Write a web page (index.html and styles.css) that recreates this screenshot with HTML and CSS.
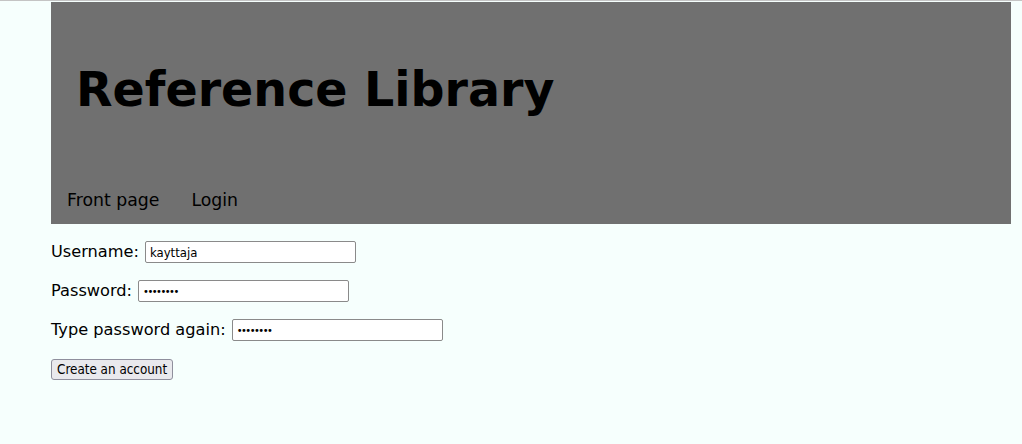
FILE: index.html
```html
<!DOCTYPE html>
<html>
<head>
<meta charset="utf-8">
<title>Reference Library</title>
<link rel="stylesheet" href="styles.css">
</head>
<body>
<div class="page">
  <header class="header">
    <h1 class="title">Reference Library</h1>
    <nav class="nav">
      <a class="nav-link" href="#">Front page</a>
      <a class="nav-link" href="#">Login</a>
    </nav>
  </header>
  <form class="form">
    <div class="row"><span class="label">Username:</span><input class="field" type="text" value="kayttaja"></div>
    <div class="row"><span class="label">Password:</span><input class="field secret" type="password" value="salasana"></div>
    <div class="row"><span class="label">Type password again:</span><input class="field secret" type="password" value="salasana"></div>
    <div class="row"><button class="btn" type="button">Create an account</button></div>
  </form>
</div>
</body>
</html>
```

FILE: styles.css
```css
html {
  background: #f6fffd;
}
body {
  margin: 0;
  border-top: 1px solid #c4c4c4;
  font-family: "DejaVu Sans", sans-serif;
  font-size: 16px;
  color: #000;
}
.page {
  margin-left: 51px;
  width: 960px;
  padding-top: 1px;
}
.header {
  background: #707070;
  height: 222px;
  display: flex;
  flex-direction: column;
}
.title {
  margin: 0;
  padding: 58px 0 0 25px;
  font-size: 47.5px;
  font-weight: bold;
  line-height: 60px;
}
.nav {
  margin-top: auto;
  display: flex;
  padding-bottom: 13px;
}
.nav-link {
  color: #000;
  text-decoration: none;
  font-size: 17.3px;
  padding: 0 16px;
  line-height: 22px;
}
.form {
  margin: 0;
  padding-top: 16px;
  display: flex;
  flex-direction: column;
  gap: 16px;
}
.row {
  height: 23px;
  display: flex;
  align-items: center;
  gap: 6px;
}
.label {
  font-size: 16.2px;
  line-height: 23px;
}
.field {
  box-sizing: border-box;
  width: 211px;
  height: 22px;
  margin: 1px 0 0;
  padding: 1px 4px;
  border: 1px solid #8a8a8a;
  border-radius: 2px;
  background: #fff;
  font-family: "DejaVu Sans Condensed", "DejaVu Sans", sans-serif;
  font-size: 13px;
  color: #000;
}
.secret {
  font-size: 11px;
  letter-spacing: -1.5px;
}
.btn {
  box-sizing: border-box;
  height: 21px;
  margin-top: 2px;
  padding: 0 5px;
  border: 1px solid #8f8f9d;
  border-radius: 3px;
  background: #e9e9ed;
  font-family: "DejaVu Sans Condensed", "DejaVu Sans", sans-serif;
  font-size: 13.33px;
  color: #000;
}
```
